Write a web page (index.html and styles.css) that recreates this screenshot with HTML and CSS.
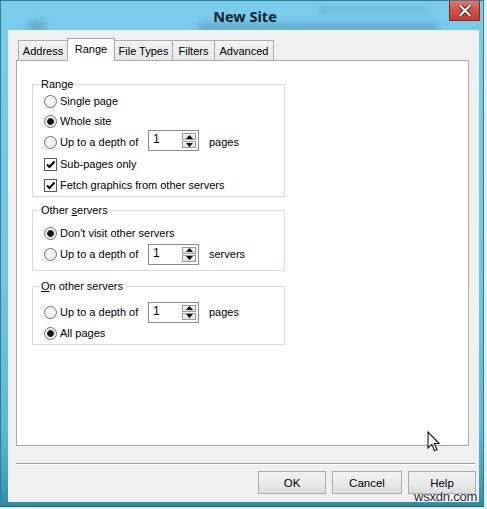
FILE: index.html
```html
<!DOCTYPE html>
<html>
<head>
<meta charset="utf-8">
<link rel="stylesheet" href="styles.css">
</head>
<body>
<div class="window">
  <div class="titlebar">
    <span class="blur blur-a"></span>
    <span class="blur blur-b"></span>
    <span class="blur blur-c"></span>
    <span class="spacer"></span>
    <span class="title">New Site</span>
    <span class="close-wrap">
      <span class="close">
        <svg width="12" height="11" viewBox="0 0 12 11"><path d="M1.5 1 L10.5 10 M10.5 1 L1.5 10" stroke="#3a1a16" stroke-width="4" stroke-linecap="square"/><path d="M1.5 1 L10.5 10 M10.5 1 L1.5 10" stroke="#ffffff" stroke-width="2.2" stroke-linecap="square"/></svg>
      </span>
    </span>
  </div>
  <div class="client">
    <div class="tabs">
      <span class="tab t-address">Address</span>
      <span class="tab t-range selected">Range</span>
      <span class="tab t-types">File Types</span>
      <span class="tab t-filters">Filters</span>
      <span class="tab t-advanced">Advanced</span>
    </div>
    <div class="panel">
      <fieldset class="group g-range">
        <legend>Range</legend>
        <div class="row"><span class="radio"></span><span class="label">Single page</span></div>
        <div class="row"><span class="radio on"></span><span class="label">Whole site</span></div>
        <div class="row tall"><span class="radio"></span><span class="label fixed">Up to a depth of</span>
          <span class="spin lift"><span class="spin-value">1</span><span class="spin-btns"><span class="spin-btn"><svg width="7" height="4" viewBox="0 0 7 4"><path d="M0 4 L3.5 0 L7 4 Z" fill="#000"/></svg></span><span class="spin-btn"><svg width="7" height="4" viewBox="0 0 7 4"><path d="M0 0 L7 0 L3.5 4 Z" fill="#000"/></svg></span></span></span>
          <span class="unit">pages</span></div>
        <div class="row tall"><span class="check"><svg width="11" height="11" viewBox="0 0 11 11"><path d="M2 5.5 L4.5 8 L9.5 2.5" fill="none" stroke="#000" stroke-width="2"/></svg></span><span class="label">Sub-pages only</span></div>
        <div class="row"><span class="check"><svg width="11" height="11" viewBox="0 0 11 11"><path d="M2 5.5 L4.5 8 L9.5 2.5" fill="none" stroke="#000" stroke-width="2"/></svg></span><span class="label">Fetch graphics from other servers</span></div>
      </fieldset>
      <fieldset class="group g-other">
        <legend>Other <u>s</u>ervers</legend>
        <div class="row"><span class="radio on"></span><span class="label">Don't visit other servers</span></div>
        <div class="row tall"><span class="radio"></span><span class="label fixed">Up to a depth of</span>
          <span class="spin"><span class="spin-value">1</span><span class="spin-btns"><span class="spin-btn"><svg width="7" height="4" viewBox="0 0 7 4"><path d="M0 4 L3.5 0 L7 4 Z" fill="#000"/></svg></span><span class="spin-btn"><svg width="7" height="4" viewBox="0 0 7 4"><path d="M0 0 L7 0 L3.5 4 Z" fill="#000"/></svg></span></span></span>
          <span class="unit">servers</span></div>
      </fieldset>
      <fieldset class="group g-on">
        <legend><u>O</u>n other servers</legend>
        <div class="row tall"><span class="radio"></span><span class="label fixed">Up to a depth of</span>
          <span class="spin"><span class="spin-value">1</span><span class="spin-btns"><span class="spin-btn"><svg width="7" height="4" viewBox="0 0 7 4"><path d="M0 4 L3.5 0 L7 4 Z" fill="#000"/></svg></span><span class="spin-btn"><svg width="7" height="4" viewBox="0 0 7 4"><path d="M0 0 L7 0 L3.5 4 Z" fill="#000"/></svg></span></span></span>
          <span class="unit">pages</span></div>
        <div class="row"><span class="radio on"></span><span class="label">All pages</span></div>
      </fieldset>
    </div>
    <div class="separator"></div>
    <div class="buttons">
      <span class="btn b-ok">OK</span>
      <span class="btn b-cancel">Cancel</span>
      <span class="btn b-help">Help</span>
    </div>
  </div>
</div>
<svg class="cursor" width="14" height="22" viewBox="0 0 14 22"><path d="M1 1 L1 17 L4.8 13.4 L7.6 19.8 L10 18.8 L7.3 12.5 L12.3 12.5 Z" fill="#ffffff" stroke="#111111" stroke-width="1.1" stroke-linejoin="miter"/></svg>
<div class="watermark">wsxdn.com</div>
</body>
</html>
```
FILE: styles.css
```css
* { box-sizing: border-box; }
html, body { margin: 0; padding: 0; }
body {
  width: 487px;
  height: 509px;
  overflow: hidden;
  position: relative;
  background: #e4edf1;
  font-family: "Liberation Sans", Arial, sans-serif;
  font-size: 11px;
  color: #000;
}
.window {
  width: 484px;
  height: 507px;
  border: 1px solid #2f7f99;
  border-bottom-color: #1f5f72;
  background: linear-gradient(180deg, #7bcbec 0%, #70c5e8 55%, #5db8db 85%, #3f9db9 96%, #2f8aa2 100%);
  padding: 0 4px 4px 7px;
  display: flex;
  flex-direction: column;
}
.titlebar {
  height: 29px;
  position: relative;
  display: grid;
  grid-template-columns: 1fr auto 1fr;
  align-items: start;
}
.blur {
  position: absolute;
  border-radius: 6px;
  filter: blur(3px);
  background: rgba(30, 90, 125, 0.28);
}
.blur-a { left: 190px; top: 22px; width: 240px; height: 8px; }
.blur-b { left: 310px; top: 6px; width: 110px; height: 6px; background: rgba(40, 100, 135, 0.16); }
.blur-c { left: 20px; top: 20px; width: 18px; height: 10px; background: rgba(30, 80, 110, 0.25); }
.title {
  position: relative;
  font-family: "Noto Sans", "Open Sans", sans-serif;
  font-weight: 700;
  font-size: 14.5px;
  color: #10202c;
  line-height: 30px;
  margin-left: 3px;
}
.close-wrap { justify-self: end; display: flex; position: relative; }
.close {
  width: 31px;
  height: 20px;
  margin-right: -1px;
  background: linear-gradient(180deg, #e0786c 0%, #d2544a 45%, #c43c32 100%);
  border: 1px solid #7c2a22;
  border-top: none;
  display: flex;
  align-items: center;
  justify-content: center;
}
.client {
  width: 471px;
  height: 472px;
  background: #f0f0f0;
  display: flex;
  flex-direction: column;
  position: relative;
}
.tabs {
  margin: 8px 0 0 10px;
  height: 22px;
  display: flex;
  align-items: flex-end;
  position: relative;
  z-index: 2;
}
.tab {
  height: 20px;
  border: 1px solid #acacac;
  border-bottom: none;
  background: linear-gradient(180deg, #f3f3f3, #e8e8e8);
  display: flex;
  align-items: center;
  justify-content: center;
  padding-top: 1px;
  margin-left: -1px;
  white-space: nowrap;
}
.tab.t-address { margin-left: 0; width: 50px; }
.tab.t-range { width: 48px; }
.tab.t-types { width: 59px; }
.tab.t-filters { width: 43px; }
.tab.t-advanced { width: 60px; }
.tab.selected {
  height: 23px;
  margin-bottom: -1px;
  background: #fff;
  position: relative;
  z-index: 3;
  padding-top: 0;
  padding-bottom: 3px;
}
.panel {
  margin-left: 8px;
  width: 453px;
  height: 386px;
  border: 1px solid #a9a9a9;
  background: #fff;
  padding: 17px 0 0 15px;
  position: relative;
  z-index: 1;
}
.group {
  width: 253px;
  margin: 0;
  padding: 0 0 0 11px;
  border: 1px solid #d5dadd;
  min-width: 0;
}
.group legend {
  padding: 0 2px;
  margin-left: -5px;
  line-height: 13px;
}
.g-range { padding-bottom: 1px; }
.g-other { margin-top: 7px; padding-top: 6px; padding-bottom: 5px; }
.g-on { margin-top: 9px; padding-top: 8px; padding-bottom: 1px; }
.row {
  height: 20px;
  display: flex;
  align-items: center;
}
.row.tall { height: 22px; }
.radio {
  width: 13px;
  height: 13px;
  border-radius: 50%;
  border: 1px solid #707070;
  background: radial-gradient(circle at 50% 40%, #ffffff 0, #f2f2f2 60%, #e2e2e2 100%);
  flex: none;
  margin-right: 3px;
}
.radio.on {
  background: radial-gradient(circle, #141414 0, #141414 2.6px, #4a4a4a 3.2px, #f4f4f4 3.8px, #e6e6e6 100%);
}
.check {
  width: 13px;
  height: 13px;
  border: 1px solid #5a5a5a;
  background: #fff;
  flex: none;
  margin-right: 3px;
  display: flex;
  align-items: center;
  justify-content: center;
}
.label { white-space: nowrap; }
.label.fixed { width: 88px; }
.spin {
  width: 51px;
  height: 21px;
  border: 1px solid #8a8a8a;
  background: #fff;
  display: flex;
  flex: none;
}
.spin.lift { margin-bottom: 3px; }
.spin-value {
  flex: 1;
  padding-left: 4px;
  line-height: 17px;
  font-size: 12px;
}
.spin-btns {
  width: 14px;
  margin: 2px 2px 2px 0;
  display: flex;
  flex-direction: column;
  gap: 1px;
}
.spin-btn {
  flex: 1;
  border: 1px solid #9c9c9c;
  background: linear-gradient(180deg, #f6f6f6, #dedede);
  display: flex;
  align-items: center;
  justify-content: center;
}
.unit { margin-left: 10px; white-space: nowrap; }
.separator {
  margin: 17px 0 0 8px;
  width: 459px;
  height: 2px;
  border-top: 1px solid #a0a0a0;
  border-bottom: 1px solid #ffffff;
}
.buttons {
  margin-top: 6px;
  display: flex;
  justify-content: flex-end;
  gap: 6px;
  padding-right: 3px;
}
.btn {
  height: 23px;
  border: 1px solid #acacac;
  background: linear-gradient(180deg, #f2f2f2 0%, #ebebeb 50%, #dddddd 100%);
  display: flex;
  align-items: center;
  justify-content: center;
  font-size: 11.5px;
}
.b-ok { width: 68px; }
.b-cancel { width: 70px; }
.b-help { width: 68px; }
.cursor {
  position: absolute;
  left: 427px;
  top: 431px;
  z-index: 10;
}
.watermark {
  position: absolute;
  left: 414px;
  top: 489px;
  z-index: 10;
  font-family: "Liberation Sans", Arial, sans-serif;
  font-size: 13px;
  letter-spacing: -0.2px;
  color: #142838;
  text-shadow: 0 0 2px #fff, 0 0 2px #fff, 0 0 1px #fff;
}
```
